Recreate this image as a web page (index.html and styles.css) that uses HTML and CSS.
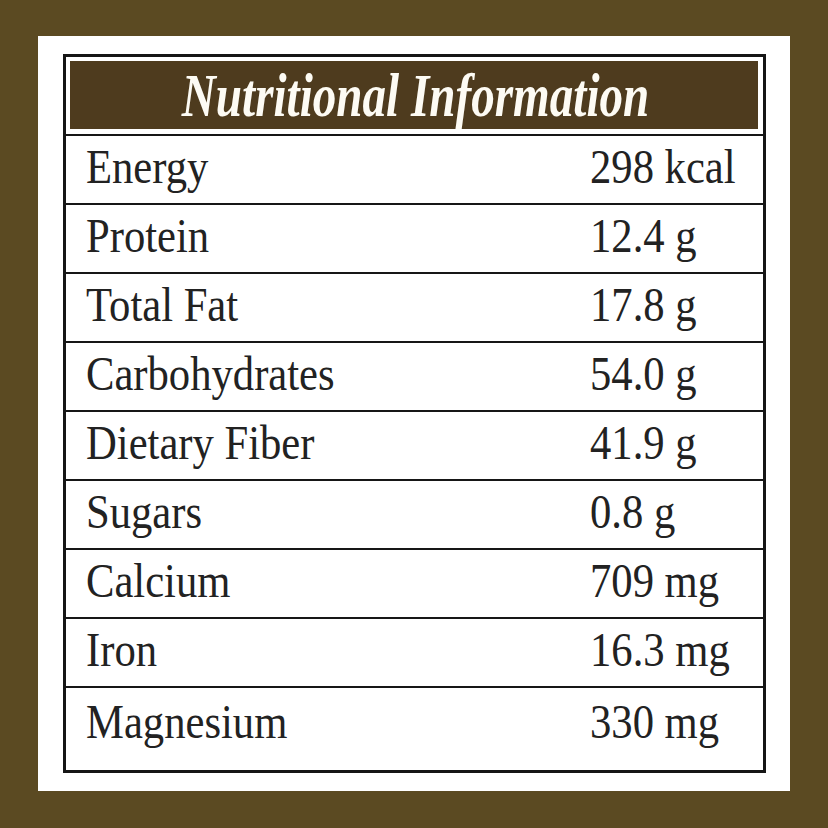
FILE: index.html
```html
<!DOCTYPE html>
<html lang="en">
<head>
<meta charset="utf-8">
<title>Nutritional Information</title>
<link rel="stylesheet" href="styles.css">
</head>
<body>
<div class="panel">
  <div class="table">
    <div class="head"><h1 class="title"><span>Nutritional Information</span></h1></div>
    <div class="row"><span class="label"><span>Energy</span></span><span class="value"><span>298 kcal</span></span></div>
    <div class="row"><span class="label"><span>Protein</span></span><span class="value"><span>12.4 g</span></span></div>
    <div class="row"><span class="label"><span>Total Fat</span></span><span class="value"><span>17.8 g</span></span></div>
    <div class="row"><span class="label"><span>Carbohydrates</span></span><span class="value"><span>54.0 g</span></span></div>
    <div class="row"><span class="label"><span>Dietary Fiber</span></span><span class="value"><span>41.9 g</span></span></div>
    <div class="row"><span class="label"><span>Sugars</span></span><span class="value"><span>0.8 g</span></span></div>
    <div class="row"><span class="label"><span>Calcium</span></span><span class="value"><span>709 mg</span></span></div>
    <div class="row"><span class="label"><span>Iron</span></span><span class="value"><span>16.3 mg</span></span></div>
    <div class="row"><span class="label"><span>Magnesium</span></span><span class="value"><span>330 mg</span></span></div>
  </div>
</div>
</body>
</html>
```
FILE: styles.css
```css
html, body {
  margin: 0;
}
body {
  width: 828px;
  height: 828px;
  box-sizing: border-box;
  padding: 36px 38px 37px 38px;
  background: #5b4a22;
}
.panel {
  height: 100%;
  box-sizing: border-box;
  background: #fff;
  padding: 18px 24px 18px 25px;
}
.table {
  height: 100%;
  box-sizing: border-box;
  border: 3px solid #161616;
  display: flex;
  flex-direction: column;
  font-family: "Liberation Serif", "Times New Roman", serif;
  color: #222;
}
.head {
  padding: 4px 5px 5px 4px;
  border-bottom: 2px solid #161616;
}
.title {
  margin: 0;
  height: 68px;
  background: #4e3b1e;
  display: flex;
  align-items: center;
  justify-content: center;
  font-style: italic;
  font-weight: bold;
  font-size: 62px;
  line-height: 1;
  color: #fdfbf4;
  overflow: hidden;
}
.title span {
  display: inline-block;
  white-space: nowrap;
  transform: scaleX(0.76);
  margin-left: 4px;
}
.row {
  height: 69px;
  box-sizing: border-box;
  border-bottom: 2px solid #161616;
  padding-bottom: 7px;
  display: flex;
  align-items: center;
  font-size: 49px;
  line-height: 1;
}
.row:last-child {
  flex: 1;
  border-bottom: 0;
  padding-bottom: 15px;
}
.label {
  width: 504px;
  padding-left: 20px;
  flex: none;
}
.value {
  flex: 1;
}
.label span, .value span {
  display: inline-block;
  white-space: nowrap;
  transform: scaleX(0.87);
  transform-origin: left center;
}
```
